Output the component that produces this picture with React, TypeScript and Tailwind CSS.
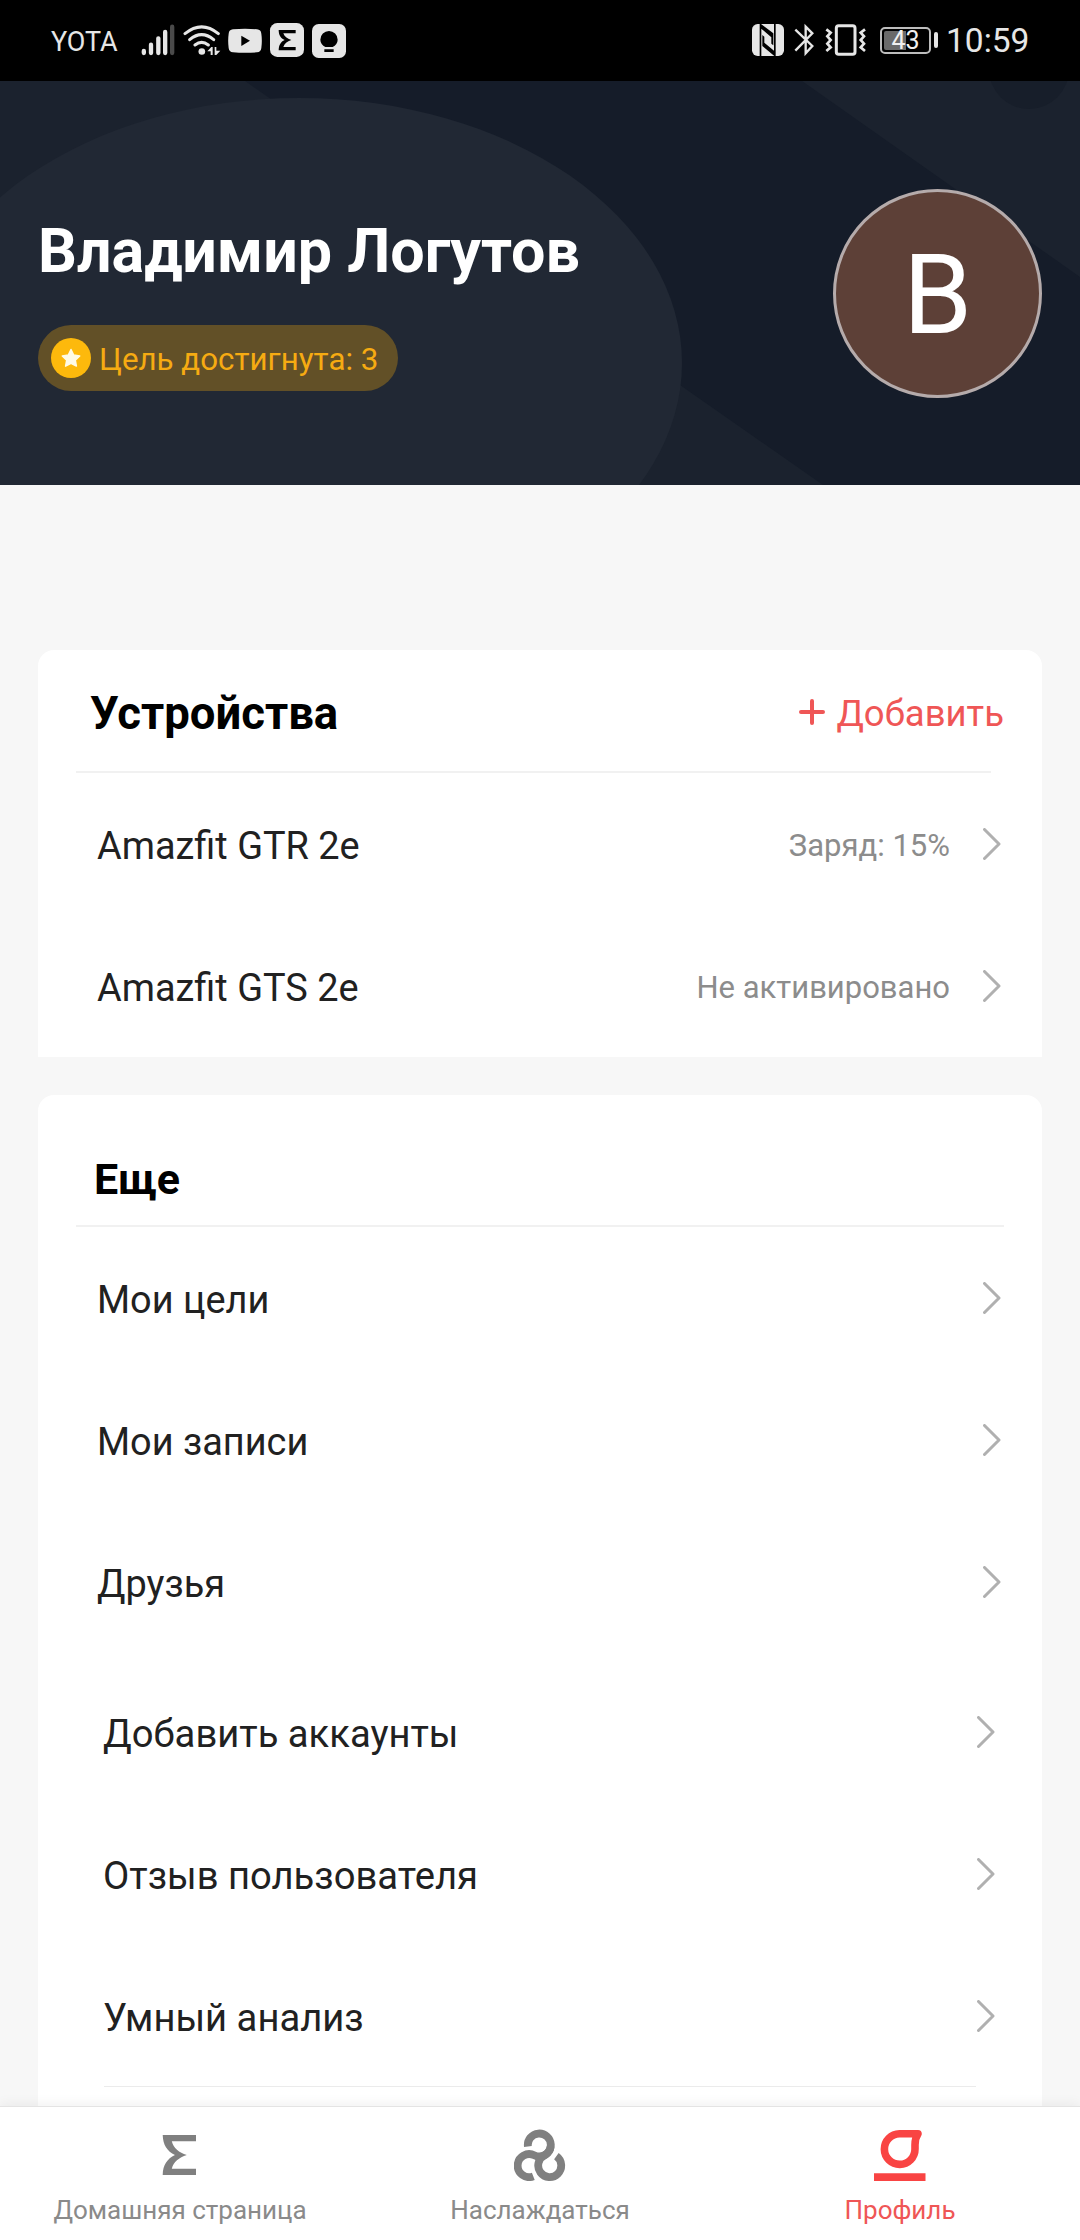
import React from 'react';

interface RowProps {
    label: string;
    value?: string;
    inset?: boolean;
}

interface NavItemProps {
    label: string;
    active?: boolean;
    children: React.ReactNode;
}

const devices = [
    { name: 'Amazfit GTR 2e', status: 'Заряд: 15%' },
    { name: 'Amazfit GTS 2e', status: 'Не активировано' },
];

const moreItems = ['Мои цели', 'Мои записи', 'Друзья'];
const serviceItems = ['Добавить аккаунты', 'Отзыв пользователя', 'Умный анализ'];

const SIGMA_PATH = 'M8.7 6H42v6.2H17.8C19.5 19 25 23.5 32.8 26.1 25 28.7 19.5 33 17.8 39.8H42V46H8.7C9 36 13 30 21 26.100 13 22 9 16 8.700 6Z';

const SignalIcon = () => (
    <svg className="h-9 w-9" viewBox="420 66 108 108" strokeWidth="13" strokeLinecap="round" stroke="#e6e6e6">
        <path d="M431.5 153v6M453 134v25M475 115v44M495.5 96v63" />
        <path d="M516.5 80v79" stroke="#4a4a4a" />
    </svg>
);

const WifiIcon = () => (
    <svg className="ml-1.5 h-9 w-10" viewBox="546 66 120 108" fill="none" stroke="#e6e6e6" strokeWidth="9" strokeLinecap="round">
        <path d="M555 101Q605 60 655 101M569 119Q605 89 641 119M585 135Q605 119 625 135" />
        <circle cx="605.5" cy="154.5" r="10" fill="#e6e6e6" stroke="none" />
        <path d="M622 154l12-13h4v24h-6v-11zM644 141h5v11h12l-12 13h-5z" fill="#e6e6e6" stroke="none" />
    </svg>
);

const YoutubeIcon = () => (
    <svg className="ml-[5px] size-9" viewBox="681 66 108 108">
        <path d="M699 88Q735 85 771 88Q783 89 784 101Q787 122 784 144Q783 156 771 157Q735 160 699 157Q687 156 686 144Q683 122 686 101Q687 89 699 88Z" fill="#e6e6e6" />
        <path d="M724 107v31l26-15.5z" fill="#000" />
    </svg>
);

const ZeppIcon = () => (
    <svg className="ml-1.5 size-9" viewBox="807 66 108 108">
        <rect x="810" y="69" width="102" height="102" rx="22" fill="#e6e6e6" />
        <path d="M836 90h51v10h-37c3 10 11 16 24 20-13 4-21 11-24 21h37v10h-51c0-15 6-26 18-31-12-5-18-15-18-30z" fill="#000" />
    </svg>
);

const BulbIcon = () => (
    <svg className="ml-1.5 size-9" viewBox="933 66 108 108">
        <rect x="936" y="72" width="102" height="102" rx="20" fill="#e6e6e6" />
        <path d="M976 141c-9-4-15-13-15-22a26 26 0 0 1 52 0c0 9-6 18-15 22zM973 148h28v8h-28z" fill="#000" />
    </svg>
);

const NfcIcon = () => (
    <svg className="size-9" viewBox="90 66 108 108">
        <rect x="93" y="72" width="96" height="96" rx="17" fill="#e6e6e6" />
        <path d="M116 72h4l37 28v36l-6-5v-19l-30-26v82h-5z" fill="#000" />
        <path d="M164 168h-4l-36-30v-33l6 5v18l29 24V72h5z" fill="#000" />
    </svg>
);

const BluetoothIcon = () => (
    <svg className="ml-1 h-9 w-[26px]" viewBox="210 66 78 108" fill="none" stroke="#e6e6e6" strokeWidth="7">
        <path d="M223 89l51 49-20 22V80l20 20-51 52" />
    </svg>
);

const VibrateIcon = () => (
    <svg className="ml-1.5 h-9 w-[46px]" viewBox="306 66 138 108" fill="none" stroke="#e6e6e6" strokeWidth="8">
        <rect x="346" y="77" width="56" height="86" rx="7" strokeWidth="9" />
        <path d="M316 88l13 10-10 11 10 11-10 11 10 11-13 11M432 88l-13 10 10 11-10 11 10 11-10 11 13 11" />
    </svg>
);

const StarIcon = () => (
    <svg className="size-10" viewBox="0 0 40 40">
        <circle cx="20" cy="20" r="20" fill="#fdb90c" />
        <path d="M20 11.5l2.7 5.5 6 .9-4.4 4.2 1.1 6L20 25.4l-5.4 2.7 1.1-6-4.4-4.2 6-.9z" fill="#fffbe6" stroke="#fffbe6" strokeWidth="1.5" strokeLinejoin="round" />
    </svg>
);

const ChevronIcon = () => (
    <svg className="h-8 w-[18px] shrink-0" viewBox="0 0 18 32" fill="none" stroke="#b0b0b0" strokeWidth="3" strokeLinecap="round" strokeLinejoin="round">
        <path d="M1.5 1.5L16 16 1.5 30.5" />
    </svg>
);

const StatusBar = () => (
    <div className="flex h-[81px] items-center justify-between bg-black pr-[51px] pb-px pl-[51px] text-[#e6e6e6]">
        <div className="flex items-center">
            <span className="w-[89px] pt-[3px] text-[27px] leading-9">YOTA</span>
            <SignalIcon />
            <WifiIcon />
            <YoutubeIcon />
            <ZeppIcon />
            <BulbIcon />
        </div>
        <div className="flex items-center">
            <NfcIcon />
            <BluetoothIcon />
            <VibrateIcon />
            <div className="ml-[11px] flex items-center gap-[3px]">
                <div className="relative h-[27px] w-[51px] rounded-[5px] border-2 border-[#bdbdbd] p-0.5">
                    <div className="h-full w-[22px] rounded-l-xs bg-[#6a6a6a]" />
                    <span className="absolute inset-0 text-center text-[25px] leading-[24px] text-[#f0f0f0]">43</span>
                </div>
                <div className="h-4 w-1 rounded-xs bg-[#e6e6e6]" />
            </div>
            <span className="ml-2 w-[83px] pt-0.5 text-[33.5px] leading-9 whitespace-nowrap">10:59</span>
        </div>
    </div>
);

const ProfileHeader = () => (
    <header className="relative flex h-[404px] justify-between overflow-hidden bg-[#151c29] pr-[38px] pl-[38px]">
        <svg className="absolute inset-0 h-full w-full" viewBox="0 0 1080 404" preserveAspectRatio="none">
            <path d="M0 0H245L823 404H0ZM802 0H1080V196Z" fill="#1b222e" />
            <ellipse cx="299" cy="282" rx="383" ry="265" fill="#212834" />
            <circle cx="1029" cy="-12" r="40" fill="#171e2a" />
        </svg>
        <div className="relative pt-[134px]">
            <h1 className="text-[61px] leading-[72px] font-bold text-white">Владимир Логутов</h1>
            <div className="mt-[38px] flex h-[66px] w-[360px] items-center rounded-full bg-[#625027] pl-[13px]">
                <StarIcon />
                <span className="ml-2 pt-[3px] text-[31.3px] leading-9 whitespace-nowrap text-[#f6ab12]">Цель достигнута: 3</span>
            </div>
        </div>
        <div className="relative mt-[108px] flex size-[209px] items-center justify-center rounded-full border-[3px] border-[#b5abab] bg-[#5d4037] pt-1 text-[111px] leading-none text-white">
            B
        </div>
    </header>
);

const Row: React.FC<RowProps> = ({ label, value, inset }) => (
    <div className={`flex h-[142px] items-center ${inset ? 'pr-[47px] pl-[65px]' : 'pr-[41px] pl-[59px]'}`}>
        <span className={`flex-1 pt-1 leading-11 text-[#212121] ${inset ? 'text-[38.2px]' : 'text-[37.9px]'}`}>{label}</span>
        {value && <span className="mr-[33px] pt-[3px] text-[31px] leading-10 text-[#8c8c8c]">{value}</span>}
        <ChevronIcon />
    </div>
);

const NavItem: React.FC<NavItemProps> = ({ label, active, children }) => (
    <button className={`flex flex-1 flex-col items-center pt-[22px] ${active ? 'text-[#f94443]' : 'text-[#808080]'}`}>
        <svg className="size-[52px]" viewBox="0 0 52 52" fill="none">{children}</svg>
        <span className={`mt-[13px] text-[26px] leading-8 ${active ? 'text-[#ef5656]' : 'text-[#8a8a8a]'}`}>{label}</span>
    </button>
);

const App = () => {
    return (
        <div className="flex h-[2240px] w-[1080px] flex-col overflow-hidden bg-[#f7f7f7] font-['Roboto',sans-serif]">
            <StatusBar />
            <ProfileHeader />
            <main className="flex min-h-0 flex-1 flex-col gap-[38px] overflow-hidden px-[38px] pt-[165px]">
                <section className="shrink-0 rounded-t-2xl bg-white">
                    <div className="flex h-[121px] items-center justify-between pr-[38px] pl-[52px]">
                        <h2 className="pt-1.5 text-[45.5px] leading-14 font-bold text-black">Устройства</h2>
                        <button className="flex items-center pt-[3px] text-[#ef5656]">
                            <svg className="size-[26px]" viewBox="0 0 26 26" stroke="currentColor" strokeWidth="4" strokeLinecap="round">
                                <path d="M13 2v22M2 13h22" />
                            </svg>
                            <span className="ml-[11px] pt-1 text-[36.5px] leading-11">Добавить</span>
                        </button>
                    </div>
                    <div className="mr-[51px] ml-[38px] h-0.5 bg-[#f1f1f1]" />
                    {devices.map((device) => (
                        <Row key={device.name} label={device.name} value={device.status} />
                    ))}
                </section>

                <section className="shrink-0 rounded-t-2xl bg-white">
                    <h2 className="h-[130px] pt-[58px] pl-[56px] text-[43px] leading-[52px] font-bold text-black">Еще</h2>
                    <div className="mr-[38px] ml-[38px] h-0.5 bg-[#f1f1f1]" />
                    {moreItems.map((item) => (
                        <Row key={item} label={item} />
                    ))}
                    <div className="pt-2">
                        {serviceItems.map((item) => (
                            <Row key={item} label={item} inset />
                        ))}
                    </div>
                    <div className="mr-[66px] ml-[66px] -mt-px h-px bg-[#ebebeb]" />
                    <div className="h-20" />
                </section>
            </main>
            <nav className="relative flex h-[134px] shrink-0 border-t border-[#e4e4e4] bg-white shadow-[0_-2px_12px_rgba(0,0,0,0.06)]">
                <NavItem label="Домашняя страница">
                    <path d={SIGMA_PATH} fill="currentColor" />
                </NavItem>
                <NavItem label="Наслаждаться">
                    <g stroke="currentColor" strokeWidth="7.8">
                        <path d="M13.9 17.5A11.5 11.5 0 1 1 25.3 27.5Q22.5 27.5 20.5 26.4A11.5 11.5 0 1 0 19.3 47.3" />
                        <path d="M36.5 17.5Q36.5 22.5 30.5 26.3A11.5 11.5 0 1 0 42.4 27.2" />
                    </g>
                </NavItem>
                <NavItem label="Профиль" active>
                    <path d="M25.5 4.8H44Q41 9 41 16V20A15.3 15.3 0 1 1 25.5 4.8Z" stroke="currentColor" strokeWidth="7.6" strokeLinejoin="round" />
                    <path d="M0 44.2h51.5v8H0z" fill="currentColor" />
                </NavItem>
            </nav>
        </div>
    );
};

export default App;
